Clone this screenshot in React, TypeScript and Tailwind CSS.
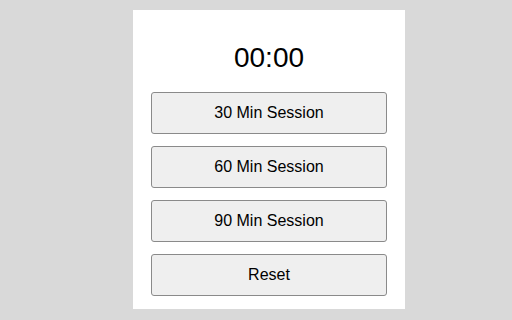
const sessions = ["30 Min Session", "60 Min Session", "90 Min Session", "Reset"];

export default function App() {
  return (
    <div className="w-[512px] h-[320px] bg-[#d9d9d9] flex pl-[133px] pt-[10px] font-['Liberation_Sans',Arial,sans-serif]">
      <div className="w-[272px] h-[299px] bg-white flex flex-col px-[18px] pt-[32px]">
        {/* Timer */}
        <div className="h-[32px] text-[28px] leading-[32px] text-black text-center">00:00</div>

        <div className="flex flex-col gap-[12px] mt-[18px]">
          {sessions.map((label) => (
            <button
              key={label}
              className="h-[42px] w-full bg-[#efefef] border border-[#8a8a8a] rounded-[3px] text-[16px] text-black flex items-center justify-center"
            >
              {label}
            </button>
          ))}
        </div>
      </div>
    </div>
  );
}
